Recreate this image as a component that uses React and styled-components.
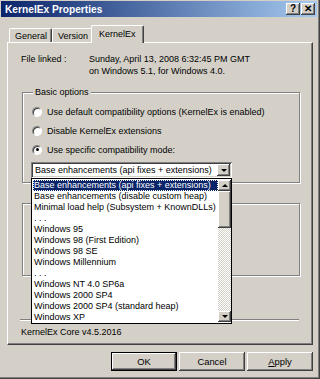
import React from "react";
import styled, { createGlobalStyle } from "styled-components";

const Global = createGlobalStyle`
  html, body { margin: 0; padding: 0; background: #d4d0c8; }
  body { font-family: "Liberation Sans", Arial, sans-serif; font-size: 9px; color: #000; }
  * { box-sizing: border-box; }
`;

const Window = styled.div`
  width: 320px;
  height: 379px;
  background: #d4d0c8;
  display: flex;
  flex-direction: column;
  padding: 1px 3px 2px 1px;
  box-shadow: inset -1px -1px 0 #404040, inset -2px -2px 0 #808080;
`;

const TitleBar = styled.div`
  height: 16px;
  display: flex;
  align-items: center;
  padding: 0 2px 0 4px;
  background: linear-gradient(to right, #0a246a, #a6caf0);
  color: #fff;
  font-weight: bold;
  font-size: 10.2px;
`;

const TitleText = styled.div`
  flex: 1;
`;

const TitleButtons = styled.div`
  display: flex;
  gap: 1px;
`;

const TitleButton = styled.div`
  width: 14px;
  height: 12px;
  background: #d4d0c8;
  color: #000;
  display: flex;
  align-items: center;
  justify-content: center;
  font-size: 10px;
  font-weight: bold;
  line-height: 1;
  box-shadow: inset -1px -1px 0 #404040, inset 1px 1px 0 #fff, inset -2px -2px 0 #808080;
`;

const Body = styled.div`
  display: flex;
  flex-direction: column;
  padding: 0 4px 0 6px;
`;

const TabsRow = styled.div`
  height: 25px;
  display: flex;
  align-items: flex-end;
  padding-left: 2px;
  position: relative;
  z-index: 1;
`;

const Tab = styled.div`
  height: ${(p) => (p.$active ? "18px" : "14px")};
  margin: ${(p) => (p.$active ? "0 -1px -1px -2px" : "0")};
  padding: ${(p) => (p.$active ? "2px 7px 0 7px" : "1px 4px 0 5px")};
  background: #d4d0c8;
  border-top: 1px solid #fff;
  border-left: 1px solid #fff;
  border-right: 1px solid #404040;
  border-radius: 2px 2px 0 0;
  box-shadow: inset -1px 0 0 #808080;
  line-height: 12px;
  white-space: nowrap;
`;

const Panel = styled.div`
  height: 303px;
  border-top: 1px solid #fff;
  border-left: 1px solid #fff;
  border-right: 1px solid #404040;
  border-bottom: 1px solid #404040;
  box-shadow: inset -1px -1px 0 #808080;
  padding: 10px 12px 0 14px;
  display: flex;
  flex-direction: column;
  position: relative;
`;

const InfoRow = styled.div`
  display: grid;
  grid-template-columns: 68px 1fr;
  line-height: 12px;
  margin-left: -1px;
`;

const Group = styled.fieldset`
  margin: ${(p) => p.$mt}px 0 0 0;
  padding: 0 0 0 8px;
  min-width: 0;
  height: ${(p) => p.$h}px;
  border: 1px solid #808080;
  box-shadow: 1px 1px 0 #fff, inset 1px 1px 0 #fff;
  display: flex;
  flex-direction: column;
`;

const Legend = styled.legend`
  padding: 0 2px;
  margin-left: 2px;
  line-height: 11px;
  background: #d4d0c8;
  position: relative;
`;

const RadioRow = styled.div`
  height: 19px;
  display: flex;
  align-items: center;
  gap: 5px;
  padding-left: 1px;
  margin-top: ${(p) => p.$mt || 0}px;
`;

const RadioCircle = styled.span`
  width: 10px;
  height: 10px;
  border-radius: 50%;
  background: #fff;
  border: 1px solid;
  border-color: #808080 #fff #fff #808080;
  box-shadow: inset 1px 1px 0 #404040;
  display: flex;
  align-items: center;
  justify-content: center;
  flex: none;
  &::after {
    content: "";
    width: 3px;
    height: 3px;
    border-radius: 50%;
    background: ${(p) => (p.$checked ? "#000" : "transparent")};
  }
`;

const ComboWrap = styled.div`
  position: relative;
  width: 201px;
  height: 16px;
  margin-top: 3px;
`;

const Combo = styled.div`
  height: 16px;
  background: #fff;
  box-shadow: inset 1px 1px 0 #808080, inset -1px -1px 0 #fff, inset 2px 2px 0 #404040, inset -2px -2px 0 #d4d0c8;
  display: flex;
  align-items: center;
  padding: 0 2px 0 4px;
  line-height: 12px;
`;

const ComboText = styled.div`
  flex: 1;
  white-space: nowrap;
`;

const ArrowButton = styled.div`
  width: 13px;
  height: ${(p) => p.$h || 12}px;
  background: #d4d0c8;
  box-shadow: inset -1px -1px 0 #404040, inset 1px 1px 0 #fff, inset -2px -2px 0 #808080;
  display: flex;
  align-items: center;
  justify-content: center;
  flex: none;
`;

const Tri = styled.span`
  width: 0;
  height: 0;
  border-left: 3px solid transparent;
  border-right: 3px solid transparent;
  ${(p) => (p.$up ? "border-bottom: 3px solid #000;" : "border-top: 3px solid #000;")}
`;

const DropList = styled.div`
  position: absolute;
  top: 16px;
  left: 0;
  width: 201px;
  height: 146px;
  background: #fff;
  border: 1px solid #000;
  z-index: 5;
  display: flex;
  padding: 1px 0 1px 1px;
`;

const Items = styled.div`
  flex: 1;
  min-width: 0;
  overflow: hidden;
  display: flex;
  flex-direction: column;
`;

const Item = styled.div`
  height: 11px;
  line-height: 11px;
  padding-left: 1px;
  white-space: nowrap;
  background: ${(p) => (p.$sel ? "#0a246a" : "transparent")};
  color: ${(p) => (p.$sel ? "#fff" : "#000")};
  outline: ${(p) => (p.$sel ? "1px dotted #fff" : "none")};
  outline-offset: -1px;
`;

const ScrollBar = styled.div`
  width: 13px;
  display: flex;
  flex-direction: column;
  background: repeating-conic-gradient(#d4d0c8 0 25%, #fff 0 50%) 0 0 / 2px 2px;
`;

const Thumb = styled.div`
  height: 37px;
  background: #d4d0c8;
  box-shadow: inset -1px -1px 0 #404040, inset 1px 1px 0 #fff, inset -2px -2px 0 #808080;
`;

const Track = styled.div`
  flex: 1;
`;

const Separator = styled.div`
  margin-top: 43px;
  height: 2px;
  border-top: 1px solid #808080;
  border-bottom: 1px solid #fff;
  width: 279px;
  margin-left: -2px;
`;

const CoreText = styled.div`
  margin-top: 5px;
  line-height: 12px;
  margin-left: -1px;
`;

const ButtonRow = styled.div`
  display: flex;
  justify-content: flex-end;
  gap: 2px;
  margin-top: 7px;
`;

const Button = styled.div`
  width: ${(p) => p.$w}px;
  height: 19px;
  display: flex;
  align-items: center;
  justify-content: center;
  background: #d4d0c8;
  box-shadow: ${(p) =>
    p.$default
      ? "inset 0 0 0 1px #000, inset -2px -2px 0 #404040, inset 2px 2px 0 #fff, inset -3px -3px 0 #808080"
      : "inset -1px -1px 0 #404040, inset 1px 1px 0 #fff, inset -2px -2px 0 #808080"};
  font-size: 9.4px;
`;

const U = styled.span`
  text-decoration: underline;
`;

const items = [
  "Base enhancements (api fixes + extensions)",
  "Base enhancements (disable custom heap)",
  "Minimal load help (Subsystem + KnownDLLs)",
  ". . .",
  "Windows 95",
  "Windows 98 (First Edition)",
  "Windows 98 SE",
  "Windows Millennium",
  ". . .",
  "Windows NT 4.0 SP6a",
  "Windows 2000 SP4",
  "Windows 2000 SP4 (standard heap)",
  "Windows XP",
];

export default function App() {
  return (
    <>
      <Global />
      <Window>
        <TitleBar>
          <TitleText>KernelEx Properties</TitleText>
          <TitleButtons>
            <TitleButton>?</TitleButton>
            <TitleButton>✕</TitleButton>
          </TitleButtons>
        </TitleBar>
        <Body>
          <TabsRow>
            <Tab>General</Tab>
            <Tab>Version</Tab>
            <Tab $active>KernelEx</Tab>
          </TabsRow>
          <Panel>
            <InfoRow>
              <div>File linked :</div>
              <div>
                Sunday, April 13, 2008 6:32:45 PM GMT
                <br />
                on Windows 5.1, for Windows 4.0.
              </div>
            </InfoRow>
            <Group $mt={10} $h={96}>
              <Legend>Basic options</Legend>
              <RadioRow $mt={4}>
                <RadioCircle />
                Use default compatibility options (KernelEx is enabled)
              </RadioRow>
              <RadioRow>
                <RadioCircle />
                Disable KernelEx extensions
              </RadioRow>
              <RadioRow>
                <RadioCircle $checked />
                Use specific compatibility mode:
              </RadioRow>
              <ComboWrap>
                <Combo>
                  <ComboText>Base enhancements (api fixes + extensions)</ComboText>
                  <ArrowButton>
                    <Tri />
                  </ArrowButton>
                </Combo>
                <DropList>
                  <Items>
                    {items.map((t, i) => (
                      <Item key={i} $sel={i === 0}>
                        {t}
                      </Item>
                    ))}
                  </Items>
                  <ScrollBar>
                    <ArrowButton $h={11}>
                      <Tri $up />
                    </ArrowButton>
                    <Thumb />
                    <Track />
                    <ArrowButton $h={11}>
                      <Tri />
                    </ArrowButton>
                  </ScrollBar>
                </DropList>
              </ComboWrap>
            </Group>
            <Group $mt={15} $h={78}>
              <Legend>Advanced options</Legend>
            </Group>
            <Separator />
            <CoreText>KernelEx Core v4.5.2016</CoreText>
          </Panel>
          <ButtonRow>
            <Button $w={66} $default>OK</Button>
            <Button $w={66}>Cancel</Button>
            <Button $w={66}>
              <span><U>A</U>pply</span>
            </Button>
          </ButtonRow>
        </Body>
      </Window>
    </>
  );
}
